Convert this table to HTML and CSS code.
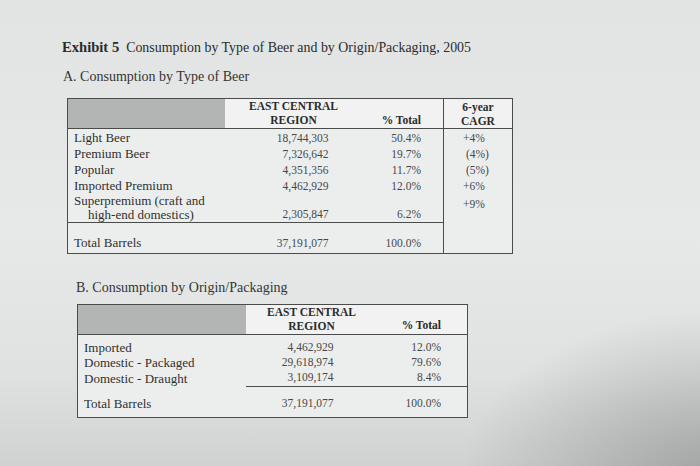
FILE: index.html
```html
<!DOCTYPE html>
<html>
<head>
<meta charset="utf-8">
<link rel="stylesheet" href="styles.css">
</head>
<body>
<div class="page">
  <h1 class="title"><b>Exhibit 5</b>&nbsp; Consumption by Type of Beer and by Origin/Packaging, 2005</h1>
  <h2 class="sub">A. Consumption by Type of Beer</h2>

  <table class="tbl tbl-a">
    <colgroup>
      <col class="a-c1"><col class="a-c2"><col class="a-c3"><col class="a-c4">
    </colgroup>
    <thead>
      <tr class="hdr">
        <th class="gray"></th>
        <th class="hc">EAST CENTRAL<br>REGION</th>
        <th class="hp">% Total</th>
        <th class="hg">6-year<br>CAGR</th>
      </tr>
    </thead>
    <tbody>
      <tr class="first"><td class="lab">Light Beer</td><td class="num">18,744,303</td><td class="pct">50.4%</td><td class="cagr">+4%</td></tr>
      <tr><td class="lab">Premium Beer</td><td class="num">7,326,642</td><td class="pct">19.7%</td><td class="cagr">&nbsp;(4%)</td></tr>
      <tr><td class="lab">Popular</td><td class="num">4,351,356</td><td class="pct">11.7%</td><td class="cagr">&nbsp;(5%)</td></tr>
      <tr><td class="lab">Imported Premium</td><td class="num">4,462,929</td><td class="pct">12.0%</td><td class="cagr">+6%</td></tr>
      <tr class="sp"><td class="lab hang">Superpremium (craft and<br>high-end domestics)</td><td class="num">2,305,847</td><td class="pct">6.2%</td><td class="cagr top">+9%</td></tr>
      <tr class="tot"><td class="lab">Total Barrels</td><td class="num">37,191,077</td><td class="pct">100.0%</td><td class="cagr"></td></tr>
    </tbody>
  </table>

  <h2 class="sub sub-b">B. Consumption by Origin/Packaging</h2>

  <table class="tbl tbl-b">
    <colgroup>
      <col class="b-c1"><col class="b-c2"><col class="b-c3">
    </colgroup>
    <thead>
      <tr class="hdr">
        <th class="gray"></th>
        <th class="hc">EAST CENTRAL<br>REGION</th>
        <th class="hp">% Total</th>
      </tr>
    </thead>
    <tbody>
      <tr class="first"><td class="lab">Imported</td><td class="num">4,462,929</td><td class="pct">12.0%</td></tr>
      <tr><td class="lab">Domestic - Packaged</td><td class="num">29,618,974</td><td class="pct">79.6%</td></tr>
      <tr class="last"><td class="lab">Domestic - Draught</td><td class="num ul">3,109,174</td><td class="pct ul">8.4%</td></tr>
      <tr class="tot"><td class="lab">Total Barrels</td><td class="num">37,191,077</td><td class="pct">100.0%</td></tr>
    </tbody>
  </table>
</div>
</body>
</html>
```

FILE: styles.css
```css
html, body {
  margin: 0;
  height: 100%;
}
body {
  width: 700px;
  height: 466px;
  overflow: hidden;
  font-family: "Liberation Serif", "Times New Roman", serif;
  color: #2e3030;
  background:
    radial-gradient(ellipse 260px 170px at 720px 480px, rgba(130,130,130,0.6), rgba(130,130,130,0) 100%),
    linear-gradient(180deg, #e2e4e3 0%, #e7e9e8 50%, #dfe2e1 80%, #cfd2d1 100%);
}
.page {
  padding: 38px 0 0 62px;
}
.title {
  margin: 0;
  font-size: 13.9px;
  font-weight: normal;
  line-height: 18px;
  color: #2a2c2c;
  white-space: nowrap;
}
.title b {
  font-size: 14.6px;
  font-weight: bold;
}
.sub {
  margin: 11px 0 0 1px;
  font-size: 14px;
  font-weight: normal;
  line-height: 18px;
  color: #333535;
}
.sub-b {
  margin: 25px 0 0 14px;
}
.tbl {
  border-collapse: collapse;
  border: 1px solid #4a4c4c;
  background: #eceeed;
  font-size: 13px;
  color: #3a3c3c;
  table-layout: fixed;
}
.tbl-a {
  margin: 12px 0 0 5px;
  width: 445px;
}
.a-c1 { width: 157px; }
.a-c2 { width: 138px; }
.a-c3 { width: 81px; }
.a-c4 { width: 69px; }

.tbl-b {
  margin: 7px 0 0 15px;
  width: 390px;
}
.b-c1 { width: 168px; }
.b-c2 { width: 132px; }
.b-c3 { width: 90px; }

.tbl th, .tbl td {
  padding: 0;
}
.hdr th {
  border-bottom: 1px solid #4a4c4c;
  font-weight: bold;
  font-size: 11.5px;
  line-height: 14px;
  color: #2a2c2c;
  background: #f1f2f1;
  height: 28px;
  box-sizing: border-box;
}
.hdr .gray {
  background: #b3b5b4;
}
.hc {
  text-align: center;
  vertical-align: bottom;
  padding-bottom: 1px !important;
}
.hp {
  text-align: right;
  vertical-align: bottom;
  padding-right: 22px !important;
  padding-bottom: 1px !important;
}
.tbl-b .hp { padding-right: 26px !important; padding-bottom: 2px !important; }
.hg {
  text-align: center;
  vertical-align: bottom;
  border-left: 1px solid #4a4c4c;
}
.tbl td {
  line-height: 16px;
  vertical-align: bottom;
}
.lab {
  padding-left: 6px !important;
  color: #2e3030;
}
.num, .pct, .cagr {
  font-size: 11.5px;
  color: #464848;
}
.num {
  text-align: right;
}
.tbl-a .num { padding-right: 34px !important; }
.tbl-b .num { padding-right: 44px !important; }
.pct {
  text-align: right;
}
.tbl-a .pct { padding-right: 22px !important; }
.tbl-b .pct { padding-right: 26px !important; }
.cagr {
  border-left: 1px solid #4a4c4c;
  padding-left: 19px !important;
}
.cagr.top {
  vertical-align: top;
  padding-top: 2px !important;
}
.tbl-a .first td { padding-top: 1px; }
.hang {
  line-height: 14px !important;
  padding-left: 20px !important;
  text-indent: -14px;
}
.tbl-a .sp td {
  padding-bottom: 0;
}
.tbl-a .sp td:not(.cagr) {
  border-bottom: 1px solid #4a4c4c;
}
.tbl-a .tot td {
  padding-top: 12px;
  padding-bottom: 2px;
}
.tbl-b td {
  line-height: 15px;
}
.tbl-b .first td { padding-top: 5px; }
.tbl-b .last td { padding-bottom: 1px; }
.tbl-b .last td.ul { border-bottom: 1px solid #4a4c4c; }
.tbl-b .tot td {
  padding-top: 9px;
  padding-bottom: 6px;
}
```
